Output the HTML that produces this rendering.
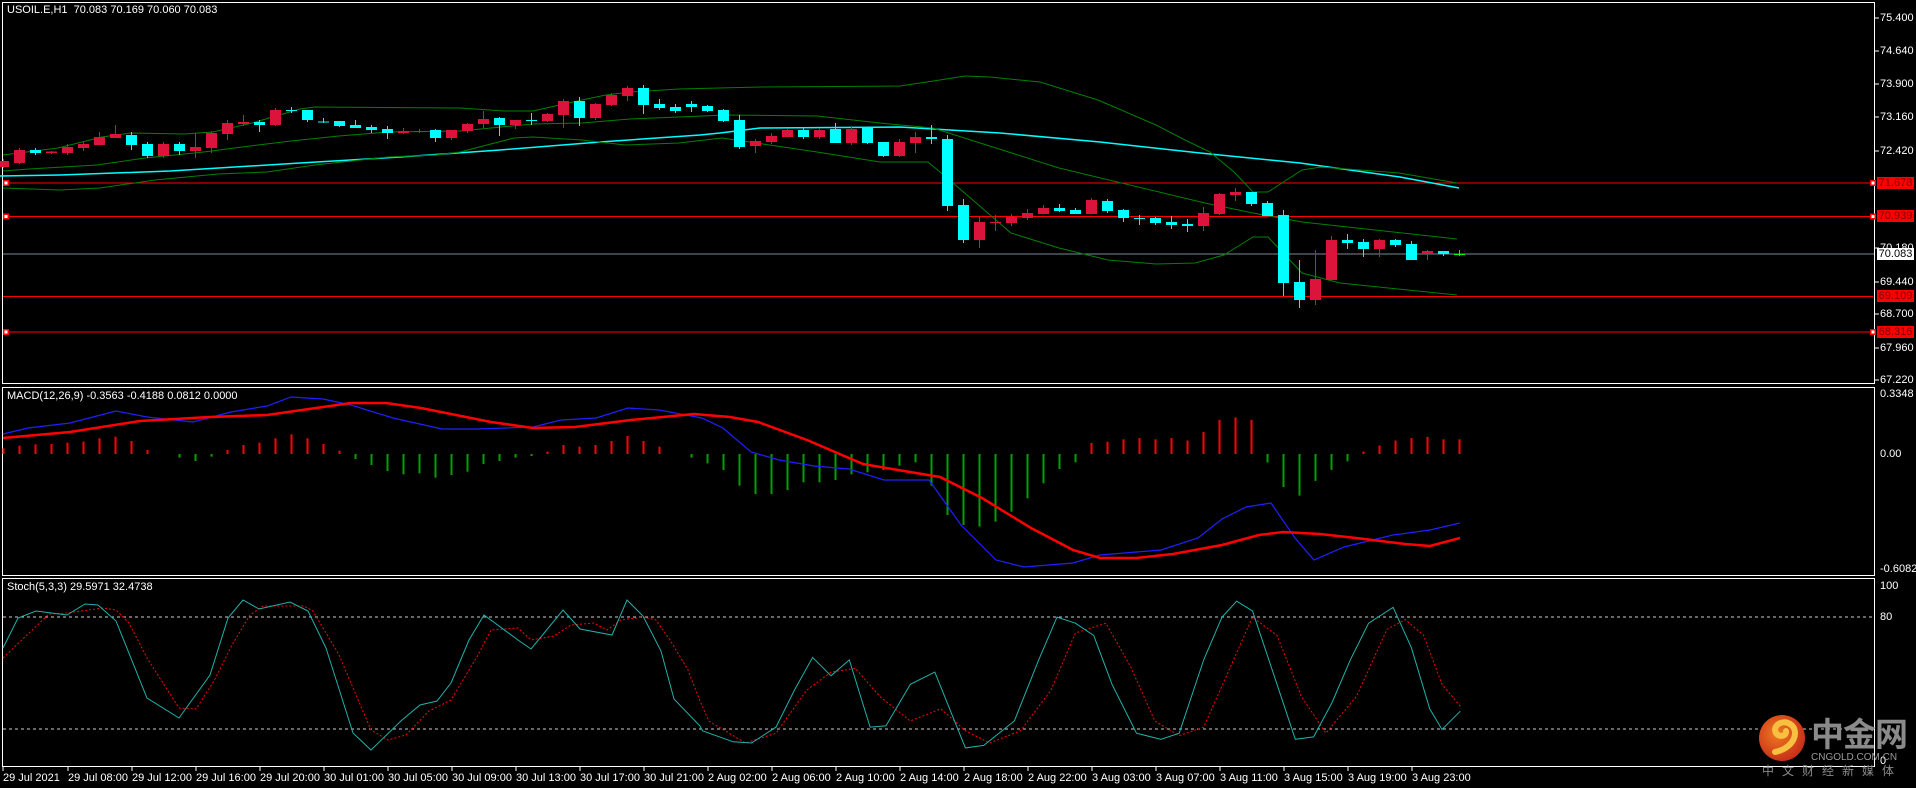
<!DOCTYPE html>
<html><head><meta charset="utf-8">
<style>
html,body{margin:0;padding:0;background:#000;}
body{width:1916px;height:788px;overflow:hidden;position:relative;font-family:"Liberation Sans",Tahoma,sans-serif;}
svg{position:absolute;left:0;top:0;}
.t{position:absolute;color:#fff;font-size:11px;white-space:nowrap;line-height:12px;}
.pl{position:absolute;left:1880px;color:#fff;font-size:11px;line-height:12px;}
.bx{position:absolute;left:1877px;width:37px;height:12px;font-size:11px;line-height:12px;text-align:center;}
</style></head><body>
<svg id="s" width="1916" height="788" viewBox="0 0 1916 788"></svg>

<div class="t" style="left:7px;top:4px;">USOIL.E,H1&nbsp; 70.083 70.169 70.060 70.083</div>
<div class="t" style="left:7px;top:390px;">MACD(12,26,9) -0.3563 -0.4188 0.0812 0.0000</div>
<div class="t" style="left:7px;top:581px;">Stoch(5,3,3) 29.5971 32.4738</div>

<div class="pl" style="top:12px">75.400</div>
<div class="pl" style="top:45px">74.640</div>
<div class="pl" style="top:78px">73.900</div>
<div class="pl" style="top:111px">73.160</div>
<div class="pl" style="top:145px">72.420</div>
<div class="bx" style="top:177px;background:#f00;color:#700;">71.678</div>
<div class="bx" style="top:210px;background:#f00;color:#700;">70.939</div>
<div class="pl" style="top:242px">70.180</div>
<div class="bx" style="top:248px;background:#fff;color:#000;">70.083</div>
<div class="pl" style="top:276px">69.440</div>
<div class="bx" style="top:290px;background:#f00;color:#700;">69.109</div>
<div class="pl" style="top:308px">68.700</div>
<div class="bx" style="top:326px;background:#f00;color:#700;">68.316</div>
<div class="pl" style="top:342px">67.960</div>
<div class="pl" style="top:374px">67.220</div>
<div class="pl" style="top:388px">0.3348</div>
<div class="pl" style="top:448px">0.00</div>
<div class="pl" style="top:563px">-0.6082</div>
<div class="pl" style="top:580px">100</div>
<div class="pl" style="top:611px">80</div>
<div class="pl" style="top:755px">0</div>

<div id="tl"></div>

<div style="position:absolute;left:1811px;top:712px;font-family:'Noto Sans CJK SC',sans-serif;font-size:33px;font-weight:bold;color:#8a8a8a;line-height:40px;letter-spacing:-1px;">中金网</div>
<div style="position:absolute;left:1811px;top:752px;font-size:10px;color:#9a9a9a;line-height:11px;">CNGOLD.COM.CN</div>
<div style="position:absolute;left:1762px;top:764px;font-family:'Noto Sans CJK SC',sans-serif;font-size:12px;color:#8a8a8a;line-height:14px;letter-spacing:8px;">中文财经新媒体</div>

<script>
var s=document.getElementById('s');var h='';
function L(x1,y1,x2,y2,c,w,extra){h+='<line x1="'+x1+'" y1="'+y1+'" x2="'+x2+'" y2="'+y2+'" stroke="'+c+'" stroke-width="'+(w||1)+'" '+(extra||'')+'/>';}
function R(x,y,w,hh,c){h+='<rect x="'+x+'" y="'+y+'" width="'+w+'" height="'+hh+'" fill="'+c+'"/>';}
function P(pts,c,w,sc,extra){var k=sc||1;h+='<polyline fill="none" stroke="'+c+'" stroke-width="'+(w||1)+'" '+(extra||'')+' points="'+pts.map(function(p){return (p[0]*k).toFixed(1)+','+(p[1]*k).toFixed(1)}).join(' ')+'"/>';}
var S=1.222;
function sc(a){return a.map(function(p){return [p[0]*S,p[1]*S];});}
// frames
h+='<rect x="2.5" y="2.5" width="1872" height="381" fill="none" stroke="#fff"/>';
h+='<rect x="2.5" y="387.5" width="1872" height="188" fill="none" stroke="#fff"/>';
h+='<rect x="2.5" y="578.5" width="1872" height="188" fill="none" stroke="#fff"/>';
[18,51,84,117,151,248,282,314,348,380].forEach(function(y){L(1875,y,1879,y,'#fff');});
L(3,183,1873,183,'#f00');L(3,216.5,1873,216.5,'#f00');L(3,296.5,1873,296.5,'#f00');L(3,332,1873,332,'#f00');
L(3,254,1874,254,'#778899');
[183,216.5,332].forEach(function(y){R(3,y-3,6,6,'#f00');R(4.5,y-1.5,3,3,'#fff');R(1870,y-3,6,6,'#f00');R(1871.5,y-1.5,3,3,'#fff');});
// bands
P([[0,176],[60,175],[170,171],[300,163],[400,157],[500,150],[600,142],[700,135],[720,133],[760,128],[900,127],[1000,133],[1100,142],[1200,153],[1300,163],[1400,177],[1459,188]],'#0ff',1.5);
P([[3,188],[60,190],[100,188],[155,180],[218,174],[267,172],[315,165],[388,157],[436,155],[460,152],[514,138],[533,137],[582,140],[625,145],[679,143],[722,138],[817,152],[880,162],[928,162],[953,183],[1011,233],[1059,248],[1108,260],[1156,264],[1195,263],[1224,255],[1253,237],[1268,237],[1302,273],[1340,283],[1457,295]],'#008000',1);
P([[3,171],[29,169],[97,165],[145,158],[204,152],[242,147],[291,141],[339,136],[388,132],[460,131],[533,124],[582,123],[630,119],[679,117],[727,115],[817,116],[880,123],[933,128],[1059,168],[1205,203],[1253,213],[1302,222],[1457,239]],'#008000',1);
P([[3,155],[58,148],[102,137],[131,133],[184,134],[213,132],[252,123],[300,109],[315,107],[460,108],[504,111],[533,111],[582,100],[606,95],[630,92],[679,89],[760,87],[900,86],[940,80],[965,76],[990,77],[1040,82],[1098,100],[1156,125],[1185,140],[1210,152],[1234,172],[1253,192],[1268,192],[1302,170],[1321,167],[1399,173],[1457,183]],'#008000',1);
// candles
var C=[[161,167,159,168,'r'],[150,163,148,164,'r'],[150,153,148,155,'a'],[151.5,153,151,154,'r'],[147,153,144,155,'r'],[144,148,142,151,'r'],[137,145,132,145,'r'],[134,138,125,138,'r'],[135,145,132,150,'a'],[144,156,142,158,'a'],[144,156,142,158,'r'],[144,151,142,155,'a'],[147,151,133,158,'r'],[133,148,131,153,'r'],[123,134,120,140,'r'],[122,124,115,126,'r'],[122,125,120,132,'a'],[110,125,108,126,'r'],[110,111,107,113,'a'],[110,120,110,122,'a'],[121.5,122,118,123,'a'],[121,126,121,127,'a'],[125,128,120,128,'a'],[127,130,125,133,'a'],[129,133,126,139,'a'],[131,133,128,134,'r'],[131,131.5,129,133,'r'],[130,138,129,142,'a'],[130,138,130,140,'r'],[124,131,123,133,'r'],[119,124,111,128,'r'],[118,125,117,136,'a'],[120,125,120,129,'r'],[120,121,113,125,'a'],[114,121,113,122,'r'],[101,115,99,128,'r'],[101,118,97,126,'a'],[104,118,103,120,'r'],[95,105,93,106,'r'],[88,96,86,101,'r'],[88,105,85,114,'a'],[104,108,99,110,'a'],[107,111,104,113,'a'],[104,107,101,112,'a'],[106,111,105,112,'a'],[110,121,109,122,'a'],[120,147,115,149,'a'],
[141,146,139,153,'r'],[136,142,133,144,'r'],[130,137,129,137,'r'],[130,137,127,139,'a'],[130,137,128,139,'r'],[129,143,123,143,'a'],[129,143,126,145,'r'],[128,143,128,144,'a'],[142,156,142,157,'a'],[142,156,139,157,'r'],[137,143,132,153,'r'],[137,139,125,144,'a'],[139,206,135,211,'a'],[205,240,199,243,'a'],[222,240,217,248,'r'],[222,222.5,215,231,'r'],[217,223,214,226,'r'],[213,218,209,220,'r'],[208,214,205,214,'r'],[208,211,204,212,'a'],[210,214,208,214,'a'],[200,214,198,214,'r'],[201,211,199,213,'a'],[210,218,209,222,'a'],[218,218.5,215,225,'a'],[218,223,217,225,'a'],[222,225,216,229,'a'],[224,226,219,232,'a'],[213,226,207,231,'r'],[194,214,193,215,'r'],[192,195,188,201,'r'],[192,204,192,206,'a'],[203,216,201,216,'a'],[215,283,210,296,'a'],[282,300,260,308,'a'],[279,300,250,305,'r'],[240,280,236,280,'r'],[240,243,234,249,'a'],[242,249,239,257,'a'],[240,249,239,257,'r'],[240,245,239,247,'a'],[244,260,241,260,'a'],[251,254,250,260,'r'],[251,254,251,256,'a'],[254,254.8,250,256,'g']];
C.forEach(function(c,i){var x=3.5+16*i;var col=c[4]=='r'?'#dc143c':(c[4]=='a'?'#0ff':'#0f0');L(x,c[2],x,c[3],col,1);var hh=Math.max(1,c[1]-c[0]);R(x-5.5,c[0],11,hh,col);});
// MACD histogram (zoom out-y values, base 207)
var Z=[190,182,178,177,173,170,160,155,168,195,205,218,228,215,195,180,173,160,148,160,177,197,222,240,258,268,265,278,270,260,237,228,218,213,200,180,185,180,168,153,168,185,205,218,235,255,302,327,327,315,292,292,285,268,262,255,242,232,302,390,420,425,410,380,340,295,252,232];
var Hold=[333,335,334,334,333,332,330,329,333,336,339,341,346,345,341,337,336,333,330,338,340,342,347,350,355,356,358,361,358,355,352,349,347,345,341,338,336,335,337,336,339,341,342,345,348,350,367,375,373,368,365,365,360,356,355,353,350,355,356,372,392,400,403,398,390,380,370,357,347,334,333,331,330,331,330,332,325,315,313,315,350,370,377,365,356,349,341,336,332,330,329,331];
var base=454;
for(var i=0;i<92;i++){var x=3.5+16*i,y;
 if(i<Z.length){y=385+Z[i]/3;}else{var v=Hold[Math.min(i+1,91)];y=base+(v-343)*1.222;}
 if(Math.abs(y-base)<1)continue;var col=y<base?'#f00':'#00a000';L(x,Math.min(y,base),x,Math.max(y,base),col,2);}
// MACD lines real coords
P([[3,434],[28,428],[70,423],[116,411],[147,417],[193,422],[231,412],[267,406],[291,397],[323,399],[351,405],[393,418],[442,429],[477,429],[533,427],[561,420],[596,418],[628,408],[659,410],[702,418],[723,428],[751,452],[779,460],[814,466],[849,469],[884,480],[929,480],[961,525],[996,560],[1024,567],[1073,563],[1100,555],[1161,550],[1198,538],[1222,519],[1246,507],[1271,503],[1295,538],[1314,560],[1344,547],[1393,535],[1430,530],[1460,523]],'#2020ff',1.2);
P([[3,438],[70,432],[140,421],[210,417],[267,415],[295,411],[351,403],[386,403],[421,408],[491,422],[533,428],[575,427],[631,420],[694,414],[730,417],[758,422],[807,440],[863,464],[898,470],[940,477],[982,498],[1031,528],[1073,550],[1100,558],[1136,558],[1173,554],[1222,545],[1259,535],[1283,532],[1320,534],[1356,538],[1405,544],[1430,546],[1460,538]],'#f00',2.5);
// Stoch
L(3,617,1874,617,'#ccc',1,'stroke-dasharray="3,3"');L(3,729,1874,729,'#ccc',1,'stroke-dasharray="3,3"');
var sigA=[[3,658],[27,635],[49,614],[67,613],[103,608],[116,610],[129,623],[147,658],[179,708],[196,709],[214,681],[232,645],[250,615],[263,606],[304,606],[313,611],[339,655],[371,730],[388,740],[406,735],[429,711],[451,700],[478,655],[491,630],[518,628],[531,640],[554,636],[571,625],[594,623],[607,630],[621,620],[643,617],[656,620],[670,640],[688,670],[700,701]];
var sigB=sc([[580,590],[610,608],[635,600],[660,565],[680,550],[700,547],[720,570],[745,590],[770,580],[790,598],[810,608],[835,598],[860,565],[880,518],[905,510],[925,545],[945,590],[965,602],[985,595],[1005,550],[1025,505],[1045,520],[1065,570],[1085,600],[1110,570],[1135,515],[1150,507],[1165,520],[1180,560],[1195,578]]);
var mainA=[[3,648],[18,618],[36,611],[67,615],[85,604],[98,605],[116,621],[147,698],[179,718],[210,675],[228,618],[243,600],[259,609],[290,602],[308,611],[326,648],[353,733],[371,750],[402,720],[420,705],[437,701],[451,683],[469,640],[484,615],[518,640],[531,649],[563,610],[580,629],[612,635],[627,600],[643,616],[661,651],[674,699],[700,726]];
var mainB=sc([[575,598],[600,607],[615,608],[635,595],[650,565],[665,538],[680,553],[695,540],[712,595],[725,594],[745,560],[765,550],[790,612],[805,610],[830,590],[850,540],[865,505],[880,510],[895,520],[910,560],[930,600],[950,605],[965,600],[985,540],[1000,505],[1012,492],[1025,500],[1045,560],[1060,605],[1075,603],[1090,575],[1105,540],[1120,510],[1140,497],[1155,530],[1170,580],[1180,597],[1195,582]]);
P(sigA.concat(sigB),'#f00',1,1,'stroke-dasharray="2,2"');
P(mainA.concat(mainB),'#20b2aa',1);
// logo
h+='<defs><radialGradient id="lg" cx="0.4" cy="0.4" r="0.6"><stop offset="0" stop-color="#f07a20"/><stop offset="1" stop-color="#c8321a"/></radialGradient></defs>';
h+='<circle cx="1782" cy="738" r="23" fill="url(#lg)"/>';
h+='<path d="M1775 752 C1795 748 1800 730 1790 724 C1782 719 1772 726 1776 733 C1779 738 1787 736 1786 731" fill="none" stroke="#f8c040" stroke-width="6" stroke-linecap="round"/>';
var T=['29 Jul 2021','29 Jul 08:00','29 Jul 12:00','29 Jul 16:00','29 Jul 20:00','30 Jul 01:00','30 Jul 05:00','30 Jul 09:00','30 Jul 13:00','30 Jul 17:00','30 Jul 21:00','2 Aug 02:00','2 Aug 06:00','2 Aug 10:00','2 Aug 14:00','2 Aug 18:00','2 Aug 22:00','3 Aug 03:00','3 Aug 07:00','3 Aug 11:00','3 Aug 15:00','3 Aug 19:00','3 Aug 23:00'];
var th='';T.forEach(function(t,k){var x=k==0?3:Math.round(3.5+64*k);L(x,767,x,771,'#fff');th+='<div class="t" style="left:'+x+'px;top:772px;">'+t+'</div>';});
s.innerHTML=h;document.getElementById('tl').innerHTML=th;
</script>
</body></html>
